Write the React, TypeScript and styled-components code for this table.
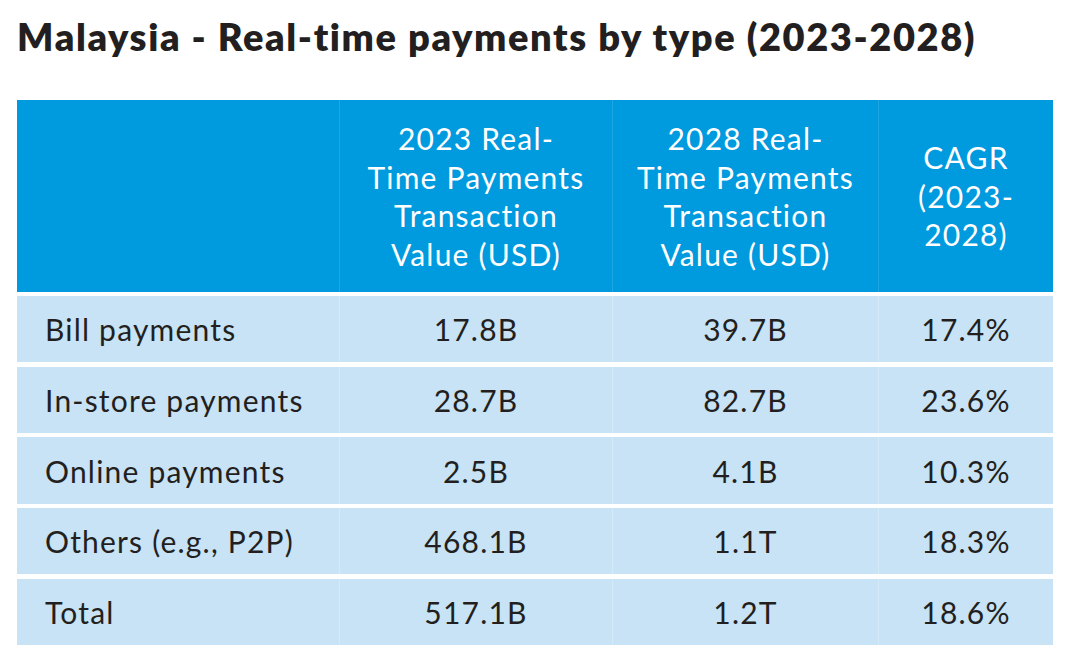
import React from "react";
import styled, { createGlobalStyle } from "styled-components";

const GlobalStyle = createGlobalStyle`
  html, body {
    margin: 0;
    padding: 0;
    background: #ffffff;
  }
  body {
    font-family: "Lato", "Liberation Sans", sans-serif;
    color: #231f20;
  }
`;

// 表のデータ
const rows = [
  { label: "Bill payments", v2023: "17.8B", v2028: "39.7B", cagr: "17.4%" },
  { label: "In-store payments", v2023: "28.7B", v2028: "82.7B", cagr: "23.6%" },
  { label: "Online payments", v2023: "2.5B", v2028: "4.1B", cagr: "10.3%" },
  { label: "Others (e.g., P2P)", v2023: "468.1B", v2028: "1.1T", cagr: "18.3%" },
  { label: "Total", v2023: "517.1B", v2028: "1.2T", cagr: "18.6%" },
];

const App = () => {
  return (
    <Page>
      <GlobalStyle />
      <Title>Malaysia - Real-time payments by type (2023-2028)</Title>
      <Table>
        <HeaderRow>
          <HeadCell />
          <HeadCell>
            2023 Real-
            <br />
            Time Payments
            <br />
            Transaction
            <br />
            Value (USD)
          </HeadCell>
          <HeadCell>
            2028 Real-
            <br />
            Time Payments
            <br />
            Transaction
            <br />
            Value (USD)
          </HeadCell>
          <HeadCell>
            CAGR
            <br />
            (2023-
            <br />
            2028)
          </HeadCell>
        </HeaderRow>
        {rows.map((row) => (
          <BodyRow key={row.label}>
            <Cell $left>{row.label}</Cell>
            <Cell>{row.v2023}</Cell>
            <Cell>{row.v2028}</Cell>
            <Cell>{row.cagr}</Cell>
          </BodyRow>
        ))}
      </Table>
    </Page>
  );
};

export default App;

const Page = styled.div`
  width: 1072px;
  height: 659px;
  padding: 14px 19px 0 17px;
  box-sizing: border-box;
  overflow: hidden;
`;

const Title = styled.h1`
  margin: 0;
  font-family: "Lato", sans-serif;
  font-weight: 800;
  font-size: 38px;
  line-height: 44px;
  letter-spacing: 1.6px;
  color: #231f20;
`;

const Table = styled.div`
  margin-top: 42px;
  display: grid;
  grid-template-columns: 322px 273px 266px 175px;
  row-gap: 4.4px;
`;

const HeaderRow = styled.div`
  display: contents;
`;

const BodyRow = styled.div`
  display: contents;
`;

const HeadCell = styled.div`
  height: 192px;
  margin-bottom: -0.4px;
  background: #009ade;
  color: #ffffff;
  font-size: 30px;
  font-weight: 400;
  letter-spacing: 1.2px;
  line-height: 38.5px;
  text-align: center;
  display: flex;
  align-items: center;
  justify-content: center;
  & + & {
    border-left: 1px solid rgba(255, 255, 255, 0.12);
  }
`;

const Cell = styled.div<{ $left?: boolean }>`
  height: 66.3px;
  background: #c7e3f5;
  font-size: 30px;
  font-weight: 400;
  letter-spacing: 1.2px;
  color: #231f20;
  display: flex;
  align-items: center;
  justify-content: ${(p) => (p.$left ? "flex-start" : "center")};
  padding-left: ${(p) => (p.$left ? "28px" : "0")};
  & + & {
    border-left: 1px solid rgba(255, 255, 255, 0.25);
  }
`;
